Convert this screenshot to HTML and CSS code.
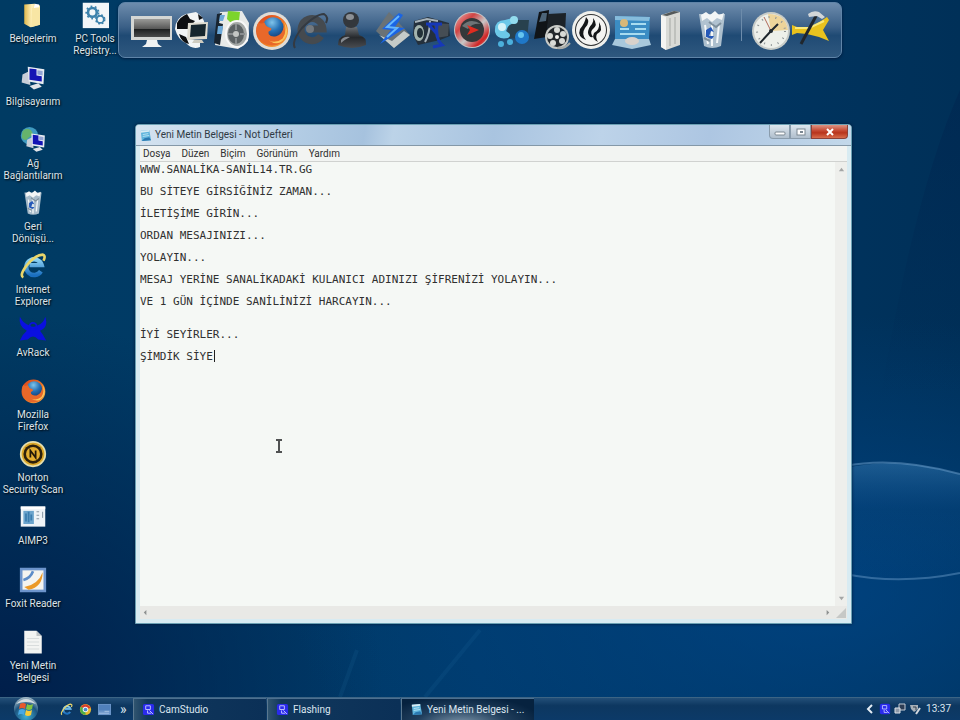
FILE: index.html
```html
<!DOCTYPE html>
<html lang="tr">
  <head>
    <meta charset="UTF-8" />
    <meta name="viewport" content="width=device-width, initial-scale=1.0" />
    <title>Yeni Metin Belgesi - Not Defteri</title>
    <link rel="stylesheet" href="styles.css">
  </head>

  <body>
    <!-- shared drawings -->
    <svg class="defs" aria-hidden="true">
      <defs>
        <linearGradient id="screen" x1="0" y1="0" x2="0" y2="1">
          <stop offset="0" stop-color="#9a9a98" />
          <stop offset="0.55" stop-color="#565656" />
          <stop offset="0.57" stop-color="#1d1f20" />
          <stop offset="1" stop-color="#4a4b4b" />
        </linearGradient>
        <linearGradient id="fox" x1="0" y1="0" x2="1" y2="1">
          <stop offset="0" stop-color="#d8401c" />
          <stop offset="0.6" stop-color="#f07a24" />
          <stop offset="1" stop-color="#f9b84a" />
        </linearGradient>
        <radialGradient id="globe" cx="0.45" cy="0.25" r="0.8">
          <stop offset="0" stop-color="#7fc4ea" />
          <stop offset="0.5" stop-color="#2470b4" />
          <stop offset="1" stop-color="#12376e" />
        </radialGradient>
        <linearGradient id="dark" x1="0" y1="0" x2="0" y2="1">
          <stop offset="0" stop-color="#6a6f74" />
          <stop offset="0.5" stop-color="#26292d" />
          <stop offset="1" stop-color="#4a4c50" />
        </linearGradient>
        <linearGradient id="folder" x1="0" y1="0" x2="1" y2="0">
          <stop offset="0" stop-color="#e0b84c" />
          <stop offset="0.5" stop-color="#fff3c0" />
          <stop offset="1" stop-color="#e6c568" />
        </linearGradient>
        <linearGradient id="redring" x1="0" y1="0" x2="1" y2="1">
          <stop offset="0" stop-color="#f0b4b4" />
          <stop offset="0.3" stop-color="#d04444" />
          <stop offset="0.55" stop-color="#c8c8c8" />
          <stop offset="0.8" stop-color="#d02424" />
          <stop offset="1" stop-color="#d8a0a0" />
        </linearGradient>
        <linearGradient id="ie" x1="0" y1="0" x2="0" y2="1">
          <stop offset="0" stop-color="#8fd4f4" />
          <stop offset="1" stop-color="#1a6fc0" />
        </linearGradient>
        <radialGradient id="orb" cx="0.5" cy="0.8" r="0.8">
          <stop offset="0" stop-color="#3fb0d8" />
          <stop offset="0.6" stop-color="#1c5580" />
          <stop offset="1" stop-color="#a8bcc8" />
        </radialGradient>

        <symbol id="i-firefox" viewBox="0 0 32 32">
          <circle cx="16" cy="16" r="15" fill="url(#fox)" />
          <circle cx="17" cy="13" r="10" fill="url(#globe)" />
          <path d="M3 8 Q6 10 9 8 Q10 12 14 13 Q17 14 14 16 Q12 16 13 19 Q15 22 20 21 Q26 19 27 12 Q32 25 21 29 Q8 32 3 21 Q0 14 3 8Z" fill="#e8682a" />
          <path d="M27 7 Q31 15 26 23 Q20 28 13 25 Q22 31 28 23 Q33 15 27 7Z" fill="#fbc45a" />
        </symbol>
        <symbol id="i-ie" viewBox="0 0 32 32">
          <path d="M25 22 A9 9 0 1 1 26 15 L12 15" fill="none" stroke="url(#ie)" stroke-width="5" />
          <path d="M5 29 Q0 27 9 15 Q19 3 27 3 Q31 4 28 10" fill="none" stroke="#e9d56a" stroke-width="3" />
        </symbol>
        <symbol id="i-computer" viewBox="0 0 32 32">
          <path d="M4 12 L12 8 L13 24 L3 21Z" fill="#c8ced8" />
          <path d="M10 3 L29 6 L28 23 L11 20Z" fill="#e8ecf2" />
          <path d="M12 5 L20 6 L20 13 L26 14 L26 20 L12 18Z" fill="#1414b4" />
          <path d="M21 7 L27 8 L27 13 L21 12Z" fill="#92a4d4" />
          <path d="M12 25 L22 22 L26 26 L17 29Z" fill="#e2e4e8" />
        </symbol>
        <symbol id="i-bin" viewBox="0 0 32 40">
          <path d="M3 4 L29 4 L25 36 Q16 40 8 36Z" fill="#c4d2dc" fill-opacity="0.85" />
          <path d="M5 5 L10 2 L14 5 L19 1 L23 5 L28 3 L26 10 L21 8 L16 12 L11 8 L6 11Z" fill="#f2f5f6" />
          <path d="M9 15 L12 34 M16 13 L16 36 M23 14 L21 33" stroke="#f4f7f8" stroke-width="2" />
          <path d="M13 12 L20 17 L25 13 M8 28 L14 31" stroke="#7d8f9c" stroke-width="2" fill="none" />
          <path d="M10 20 L15 17 L18 22 L15 21 L13 26 L18 26 L16 29 L10 27Z" fill="#2458b8" />
        </symbol>
        <symbol id="i-cam" viewBox="0 0 14 14">
          <rect x="1" y="1" width="12" height="12" rx="2" fill="#2a2aec" />
          <path d="M4 3 H9 V7 H4Z M6 8 V11 H10 M8 8 L12 12" fill="none" stroke="#c4c8ff" stroke-width="1" />
        </symbol>
        <symbol id="i-notepad" viewBox="0 0 14 14">
          <path d="M2 2 L11 1 L13 12 L3 13Z" fill="#5eb4dc" />
          <path d="M2 2 L11 1 L11 3 L2 4Z" fill="#d8ecf4" />
          <path d="M4 6 L10 5 M4 8 L11 7" stroke="#b8e4f4" />
          <path d="M3 13 L13 12 L11 9 L6 10Z" fill="#2a78b0" />
        </symbol>
      </defs>
    </svg>

    <main class="desktop">
      <svg class="wallpaper" viewBox="0 0 960 697" preserveAspectRatio="none" aria-hidden="true">
        <defs>
          <linearGradient id="glow" x1="0" y1="0" x2="0" y2="1">
            <stop offset="0" stop-color="#3f84bc" stop-opacity="0.45" />
            <stop offset="0.4" stop-color="#1e62a4" stop-opacity="0.1" />
            <stop offset="1" stop-color="#1e62a4" stop-opacity="0" />
          </linearGradient>
          <linearGradient id="shade" x1="0" y1="0" x2="0" y2="1">
            <stop offset="0" stop-color="#001c48" stop-opacity="0.3" />
            <stop offset="1" stop-color="#001c48" stop-opacity="0" />
          </linearGradient>
        </defs>
        <path d="M960 90 Q915 190 880 400 H960Z" fill="url(#shade)" />
        <path d="M845 468 Q900 456 960 474 V573 Q900 585 845 574Z" fill="url(#glow)" />
        <path d="M845 466 Q895 456 960 474" fill="none" stroke="#6ea0cc" stroke-opacity="0.5" stroke-width="2" />
        <path d="M845 574 Q900 585 960 573" fill="none" stroke="#6ea0cc" stroke-opacity="0.45" stroke-width="2" />
        <path d="M357 650 L340 697 M480 630 L425 697" stroke="#2878b0" stroke-opacity="0.12" stroke-width="4" />
      </svg>

      <nav class="icons" aria-label="Masaüstü">
        <a href="#" class="icon">
          <svg viewBox="0 0 32 32"><path d="M6 4 L18 3 L19 6 L24 5 L24 27 L13 30 L6 26Z" fill="url(#folder)" /><path d="M15 8 L24 5 L24 27 L14 30Z" fill="#f8e6a4" /><path d="M18 3 L23 4 L23 7 L17 8Z" fill="#fff" /></svg>
          <span>Belgelerim</span>
        </a>
        <a href="#" class="icon">
          <svg viewBox="0 0 32 32"><use href="#i-computer" /></svg>
          <span>Bilgisayarım</span>
        </a>
        <a href="#" class="icon">
          <svg viewBox="0 0 32 32"><circle cx="12" cy="11" r="10" fill="#3f9ac0" /><path d="M4 6 Q9 1 14 5 Q18 10 11 13 Q7 19 3 13Z" fill="#66b46c" /><svg x="6" y="6" width="26" height="26"><use href="#i-computer" /></svg></svg>
          <span>Ağ<br />Bağlantılarım</span>
        </a>
        <a href="#" class="icon">
          <svg viewBox="0 0 32 32"><svg x="3" y="1" width="26" height="30"><use href="#i-bin" /></svg></svg>
          <span>Geri<br />Dönüşü...</span>
        </a>
        <a href="#" class="icon">
          <svg viewBox="0 0 32 32"><use href="#i-ie" /></svg>
          <span>Internet<br />Explorer</span>
        </a>
        <a href="#" class="icon">
          <svg viewBox="0 0 32 32"><path d="M1 2 Q5 10 12 12 Q16 15 21 12 Q28 10 30 2 Q34 14 24 18 Q28 23 31 29 L22 28 Q16 21 10 28 L1 29 Q4 22 9 18 Q-1 13 1 2Z" fill="#0a10e0" /><circle cx="16" cy="13" r="4" fill="none" stroke="#0a10e0" stroke-width="2" /></svg>
          <span>AvRack</span>
        </a>
        <a href="#" class="icon">
          <svg viewBox="0 0 32 32"><svg x="2" y="2" width="29" height="29"><use href="#i-firefox" /></svg></svg>
          <span>Mozilla<br />Firefox</span>
        </a>
        <a href="#" class="icon">
          <svg viewBox="0 0 32 32"><circle cx="16" cy="16" r="15" fill="#e6dfae" /><circle cx="16" cy="16" r="13" fill="#dba728" /><circle cx="16" cy="16" r="11" fill="#2c200c" /><circle cx="16" cy="16" r="8" fill="#e4ae30" /><path d="M13 20 V12 L19 20 V12" fill="none" stroke="#221808" stroke-width="2" /></svg>
          <span>Norton<br />Security Scan</span>
        </a>
        <a href="#" class="icon">
          <svg viewBox="0 0 32 32"><rect x="2" y="4" width="28" height="23" fill="#eef3f7" /><rect x="5" y="9" width="12" height="15" fill="#6ca4cc" /><path d="M8 12 V21 M11 10 V22 M14 13 V20" stroke="#3a7cae" stroke-width="2" /><path d="M20 10 H23 M20 14 H23 M20 18 H23 M27 10 V17" stroke="#7a8a98" stroke-width="1" /><rect x="2" y="4" width="28" height="3" fill="#fff" /></svg>
          <span>AIMP3</span>
        </a>
        <a href="#" class="icon">
          <svg viewBox="0 0 32 32"><rect x="1" y="2" width="30" height="28" fill="#6c94cc" /><rect x="4" y="5" width="24" height="22" fill="#f4f4f0" /><path d="M5 16 Q13 14 16 6" fill="none" stroke="#5c8cc8" stroke-width="3" /><path d="M6 24 Q22 21 27 7 Q27 24 11 27Z" fill="#eb9a28" /></svg>
          <span>Foxit Reader</span>
        </a>
        <a href="#" class="icon">
          <svg viewBox="0 0 32 32"><path d="M6 3 H20 L26 9 V29 H6Z" fill="#f3f4f2" /><path d="M20 3 V9 H26Z" fill="#bfc4c6" /><path d="M9 12 H23 M9 16 H23 M9 20 H23 M9 24 H23" stroke="#d4d8d8" /></svg>
          <span>Yeni Metin<br />Belgesi</span>
        </a>
        <a href="#" class="icon">
          <svg viewBox="0 0 32 32"><rect x="2" y="2" width="30" height="29" fill="#f2f6f8" /><g fill="none" stroke="#3c82ac"><circle cx="13" cy="13" r="5" stroke-width="3" /><circle cx="13" cy="13" r="7" stroke-width="2" stroke-dasharray="2 3" /><circle cx="22" cy="21" r="4" stroke-width="2" /><circle cx="22" cy="21" r="5" stroke-width="2" stroke-dasharray="2 2" /></g></svg>
          <span>PC Tools<br />Registry...</span>
        </a>
      </nav>

      <nav class="dock" aria-label="Dock">
        <button type="button" aria-label="Bilgisayar">
          <svg viewBox="0 0 40 44"><rect x="-1" y="7" width="41" height="24" fill="#d4d6d4" /><rect x="2" y="10" width="36" height="18" fill="url(#screen)" /><path d="M15 31 H25 L26 35 L30 38 H10 L14 35Z" fill="#f0f2f2" /></svg>
        </button>
        <button type="button" aria-label="Ağ">
          <svg viewBox="0 0 40 44"><path d="M3 20 Q4 8 14 5 L24 3 Q32 8 33 16 L22 14 L18 30 L28 32 V38 Q20 41 14 34 Q6 31 3 20Z" fill="#f2f4f4" /><path d="M5 14 Q8 8 15 5 L18 10 L23 12 L16 20 L5 20Z M7 25 L14 28 L17 35 Q9 33 7 25Z M26 5 L31 9 L27 11Z" fill="#0d0e10" /><path d="M16 14 L36 13 L35 30 L15 31Z" fill="#dedbd0" /><path d="M19 16 L34 15 L33 27 L18 28Z" fill="#16262e" /><path d="M22 31 H30 L32 34 H20Z" fill="#cfccc0" /></svg>
        </button>
        <button type="button" aria-label="Denetim">
          <svg viewBox="0 0 40 44"><path d="M8 3 L30 2 L37 14 L36 32 L26 40 L3 36Z" fill="#e8eae8" /><path d="M5 5 L10 4 L7 14 L11 15 L8 36 L2 34Z" fill="#182430" /><path d="M8 6 L13 6 L11 12 L7 12Z M6 17 L11 17 L10 25 L5 25Z" fill="#6ca8d8" /><path d="M16 2 L28 3 L27 12 L19 14 L15 10Z" fill="#7cd42c" /><ellipse cx="25" cy="25" rx="11" ry="13" fill="#a4a8a6" stroke="#f8f8f8" stroke-width="2" /><ellipse cx="24" cy="25" rx="8" ry="10" fill="#5c6264" /><circle cx="24" cy="25" r="3" fill="#c4c6c4" /><path d="M24 15 V21 M24 29 V35 M16 25 H21 M28 25 H33" stroke="#8a8e90" stroke-width="2" /></svg>
        </button>
        <button type="button" aria-label="Firefox">
          <svg viewBox="0 0 40 44"><circle cx="20" cy="22" r="19" fill="#dfdcd6" /><svg x="3" y="5" width="34" height="34"><use href="#i-firefox" /></svg></svg>
        </button>
        <button type="button" aria-label="Internet Explorer">
          <svg viewBox="0 0 40 44"><path d="M29 27 A11 11 0 1 1 31 20 L15 20" fill="none" stroke="#454a4f" stroke-width="7" /><circle cx="18" cy="20" r="4" fill="#74797e" /><path d="M3 39 Q-1 33 10 19 Q24 5 32 5 Q37 8 34 14" fill="none" stroke="#343a42" stroke-width="2" /></svg>
        </button>
        <button type="button" aria-label="Messenger">
          <svg viewBox="0 0 40 44"><path d="M14 18 H25 L27 26 Q35 28 34 36 Q20 42 6 36 Q6 28 13 26Z" fill="url(#dark)" /><circle cx="19" cy="11" r="8" fill="#33373c" /><ellipse cx="18" cy="8" rx="4" ry="3" fill="#8c9095" /><path d="M9 31 Q12 27 18 28 Q12 31 9 34Z" fill="#868a90" /></svg>
        </button>
        <button type="button" aria-label="Winamp">
          <svg viewBox="0 0 40 44"><path d="M17 3 L38 26 L22 39 L4 22Z" fill="#6a7276" /><path d="M7 26 L22 39 L38 26 L32 22 L20 32Z" fill="#c6cbc8" /><path d="M27 4 L10 20 L19 21 L8 35 L33 19 L23 18 L31 6Z" fill="#1a64e4" /><path d="M27 7 L15 18 L25 19 L15 28" fill="none" stroke="#68b8fc" stroke-width="2" /></svg>
        </button>
        <button type="button" aria-label="Kamera">
          <svg viewBox="0 0 40 44"><path d="M2 12 L16 8 L37 14 L38 27 L28 31 L6 36 L1 26Z" fill="#24303c" /><path d="M22 14 L37 15 L36 27 L24 29Z" fill="#454d54" /><ellipse cx="7" cy="24" rx="5" ry="8" fill="#a4b4ae" /><ellipse cx="8" cy="24" rx="3" ry="5" fill="#223038" /><path d="M3 13 L15 10 L26 12 M18 12 Q18 24 13 33" fill="none" stroke="#a6b2ba" stroke-width="2" /><path d="M14 15 H30 M25 14 Q23 30 30 36 L21 38 M17 16 L25 25" fill="none" stroke="#1638b8" stroke-width="3" /></svg>
        </button>
        <button type="button" aria-label="Oynatıcı">
          <svg viewBox="0 0 40 44"><circle cx="20" cy="21" r="18" fill="#c4c2c4" /><circle cx="20" cy="21" r="17" fill="url(#redring)" /><circle cx="20" cy="21" r="12" fill="#34383a" /><path d="M10 17 Q18 8 29 15 Q20 14 16 20Z" fill="#6e7476" /><path d="M15 16 L27 21 L15 26 L18 21Z" fill="#e02c20" /></svg>
        </button>
        <button type="button" aria-label="Sohbet">
          <svg viewBox="0 0 40 44"><path d="M16 11 H37 L35 30 L15 29Z" fill="#28414e" /><path d="M3 23 Q2 11 13 11 Q24 7 25 14 Q16 14 14 22 Q21 26 16 29 Q5 31 3 23Z" fill="#6cc8e8" /><circle cx="10" cy="18" r="4" fill="#d4f2f8" /><circle cx="22" cy="11" r="4" fill="#93dcee" /><circle cx="30" cy="28" r="7" fill="#1f78c8" /><circle cx="29" cy="26" r="3" fill="#64c4f0" /><circle cx="9" cy="35" r="3" fill="#4cb0dc" /><circle cx="18" cy="33" r="3" fill="#4cb0dc" /></svg>
        </button>
        <button type="button" aria-label="Film">
          <svg viewBox="0 0 40 44"><path d="M7 3 L17 1 L15 28 L2 30Z" fill="#101418" /><path d="M16 5 L34 4 L33 26 L15 27Z" fill="#1c2228" /><path d="M10 4 L7 13 L14 12 L15 4Z" fill="#4c6478" /><circle cx="25" cy="28" r="12" fill="#c9cbc7" /><circle cx="25" cy="28" r="10" fill="#23282c" /><g fill="#d8dad6"><circle cx="25" cy="21" r="3" /><circle cx="31" cy="25" r="3" /><circle cx="30" cy="32" r="3" /><circle cx="21" cy="34" r="3" /><circle cx="18" cy="27" r="3" /></g><circle cx="25" cy="28" r="2" fill="#f4f4f0" /><path d="M25 39 Q33 40 38 34" fill="none" stroke="#a8aca8" stroke-width="2" /></svg>
        </button>
        <button type="button" aria-label="Yakıcı">
          <svg viewBox="0 0 40 44"><circle cx="19" cy="21" r="19" fill="#f0f0ec" /><circle cx="19" cy="21" r="16" fill="#303234" /><circle cx="19" cy="21" r="15" fill="#f4f4f2" /><path d="M14 8 Q19 13 13 19 Q9 25 14 31 Q5 28 8 20 Q13 14 14 8Z M21 9 Q27 16 20 21 Q18 24 21 28 Q17 29 16 24 Q16 19 20 15 Q22 12 21 9Z M27 13 Q32 22 25 25 Q23 28 26 33 Q19 30 22 24 Q28 21 27 13Z" fill="#141618" /></svg>
        </button>
        <button type="button" aria-label="Masaüstü ayarları">
          <svg viewBox="0 0 40 44"><path d="M3 7 L38 8 L37 30 L3 30Z" fill="#3b8dc4" /><path d="M3 7 L38 8 L37 12 L3 11Z" fill="#86bcdc" /><circle cx="12" cy="14" r="4" fill="#d8b878" /><path d="M19 15 H34 M23 20 H34 M8 20 H17 M8 25 H33" stroke="#a8dcf0" stroke-width="2" /><path d="M3 30 H37 L39 36 L20 40 L0 36Z" fill="#a8c8dc" /><ellipse cx="20" cy="32" rx="7" ry="4" fill="#d8d2cc" /></svg>
        </button>
        <button type="button" aria-label="Belgeler">
          <svg viewBox="0 0 40 44"><path d="M9 6 L22 2 L28 3 L28 36 L14 41 L9 38Z" fill="#d9dad6" /><path d="M9 6 L14 8 L14 41 L9 38Z" fill="#f4f4f2" /><path d="M10 6 L22 2 L28 3 L15 7Z" fill="#54595a" /><path d="M18 9 V37 M23 8 V35" stroke="#bfc1bd" stroke-width="2" /></svg>
        </button>
        <button type="button" aria-label="Geri Dönüşüm Kutusu">
          <svg viewBox="0 0 40 44"><svg x="4" y="1" width="32" height="40"><use href="#i-bin" /></svg></svg>
        </button>
        <span class="dock-line"></span>
        <button type="button" aria-label="Saat">
          <svg viewBox="0 0 40 44"><circle cx="20" cy="22" r="19" fill="#c8ccc8" /><circle cx="20" cy="22" r="17" fill="#eef0ea" /><path d="M20 22 L17 5 Q35 5 37 21Z" fill="#edd49a" /><circle cx="20" cy="22" r="14" fill="none" stroke="#8c9294" stroke-width="2" stroke-dasharray="1 6" /><path d="M20 22 L13 8" stroke="#b06a58" stroke-width="1" /><path d="M9 34 L20 22 L27 15" fill="none" stroke="#20282e" stroke-width="2" /><circle cx="20" cy="22" r="2" fill="#20282e" /></svg>
        </button>
        <button type="button" aria-label="Araçlar">
          <svg viewBox="0 0 40 44"><path d="M1 16 L6 18 L21 18 L36 8 L38 11 L32 21 L38 32 L28 28 L16 25 L6 24 L1 26Z" fill="#e9c21e" /><path d="M4 19 H18 L33 12" fill="none" stroke="#fbe878" stroke-width="2" /><path d="M25 7 L10 35" stroke="#20262c" stroke-width="3" /><path d="M17 5 Q22 1 28 3 L34 8 L31 10 L26 7 L18 8Z" fill="#d2d6d8" /></svg>
        </button>
      </nav>

      <section class="window">
        <header class="titlebar">
          <svg class="small" viewBox="0 0 14 14"><use href="#i-notepad" /></svg>
          <h1>Yeni Metin Belgesi - Not Defteri</h1>
          <div class="controls">
            <button type="button" aria-label="Simge durumuna küçült"><svg viewBox="0 0 12 10"><rect x="1" y="5" width="10" height="3" rx="1" fill="#fff" stroke="#7b8791" /></svg></button>
            <button type="button" aria-label="Ekranı kapla"><svg viewBox="0 0 12 10"><rect x="2" y="2" width="8" height="6" fill="#fff" stroke="#7b8791" /><rect x="5" y="4" width="3" height="2" fill="#7b8791" /></svg></button>
            <button type="button" class="close" aria-label="Kapat"><svg viewBox="0 0 12 10"><path d="M3 2 L9 8 M9 2 L3 8" stroke="#fff" stroke-width="2" /></svg></button>
          </div>
        </header>
        <nav class="menu">
          <button type="button">Dosya</button>
          <button type="button">Düzen</button>
          <button type="button">Biçim</button>
          <button type="button">Görünüm</button>
          <button type="button">Yardım</button>
        </nav>
        <div class="editor">
          <textarea aria-label="Metin" spellcheck="false">WWW.SANALİKA-SANİL14.TR.GG

BU SİTEYE GİRSİĞİNİZ ZAMAN...

İLETİŞİME GİRİN...

ORDAN MESAJINIZI...

YOLAYIN...

MESAJ YERİNE SANALİKADAKİ KULANICI ADINIZI ŞİFRENİZİ YOLAYIN...

VE 1 GÜN İÇİNDE SANİLİNİZİ HARCAYIN...


İYİ SEYİRLER...

ŞİMDİK SİYE</textarea>
          <span class="caret"></span>
          <div class="scroll-y">
            <svg viewBox="0 0 8 8"><path d="M1 6 L4 2 L7 6Z" fill="#a4a6a6" /></svg>
            <svg viewBox="0 0 8 8"><path d="M1 2 L4 6 L7 2Z" fill="#a4a6a6" /></svg>
          </div>
        </div>
        <div class="scroll-x">
          <svg viewBox="0 0 8 8"><path d="M5 1 L2 4 L5 7Z" fill="#8e9090" /></svg>
          <svg viewBox="0 0 8 8"><path d="M3 1 L6 4 L3 7Z" fill="#8e9090" /></svg>
          <svg class="grip" viewBox="0 0 12 12"><path d="M11 1 V11 H1Z" fill="#c6c8c6" /></svg>
        </div>
      </section>

      <svg class="cursor" viewBox="0 0 8 16" aria-hidden="true"><path d="M1 2 H7 M4 2 V14 M1 14 H7" fill="none" stroke="#505252" stroke-width="2" /></svg>
    </main>

    <footer class="taskbar">
      <button type="button" class="start" aria-label="Başlat">
        <svg viewBox="0 0 24 24"><circle cx="12" cy="12" r="12" fill="url(#orb)" /><path d="M2 7 Q12 -3 22 7 Q12 3 2 7Z" fill="#d4dce0" /><path d="M6 7 Q9 5 12 7 L11 12 Q8 10 5 12Z" fill="#e8582c" /><path d="M13 7 Q16 9 19 7 L18 12 Q15 14 12 12Z" fill="#84c440" /><path d="M5 13 Q8 11 11 13 L10 18 Q7 16 4 18Z" fill="#48a8e4" /><path d="M12 13 Q15 15 18 13 L17 18 Q14 20 11 18Z" fill="#f8cc38" /></svg>
      </button>
      <nav class="quick" aria-label="Hızlı başlat">
        <a href="#" aria-label="Internet Explorer"><svg viewBox="0 0 32 32"><use href="#i-ie" /></svg></a>
        <a href="#" aria-label="Chrome"><svg viewBox="0 0 14 14"><circle cx="7" cy="7" r="6" fill="#e8b830" /><path d="M7 7 L2 4 Q7 -2 13 5Z" fill="#d83c2c" /><path d="M7 7 L2 4 Q-1 11 7 13Z" fill="#4cae48" /><circle cx="7" cy="7" r="3" fill="#f0f2f4" /><circle cx="7" cy="7" r="2" fill="#4888cc" /></svg></a>
        <a href="#" aria-label="Masaüstünü göster"><svg viewBox="0 0 14 14"><rect x="0" y="1" width="14" height="12" fill="#6a94c8" /><path d="M1 2 H13 V8 H1Z" fill="#5080bc" /><path d="M7 9 H12 M1 11 H12" stroke="#a8c4e4" /></svg></a>
        <span class="more">»</span>
      </nav>
      <div class="tasks">
        <button type="button" class="task"><svg class="small" viewBox="0 0 14 14"><use href="#i-cam" /></svg>CamStudio</button>
        <button type="button" class="task"><svg class="small" viewBox="0 0 14 14"><use href="#i-cam" /></svg>Flashing</button>
        <button type="button" class="task active"><svg class="small" viewBox="0 0 14 14"><use href="#i-notepad" /></svg>Yeni Metin Belgesi - ...</button>
      </div>
      <div class="tray">
        <svg viewBox="0 0 12 12"><path d="M8 2 L4 6 L8 10" fill="none" stroke="#e4ecf4" stroke-width="2" /></svg>
        <svg viewBox="0 0 14 14"><use href="#i-cam" /></svg>
        <svg viewBox="0 0 12 12"><path d="M5 1 H11 V7 H5Z" fill="#2c3c54" stroke="#c4ccd6" /><path d="M1 5 H6 V10 H1Z" fill="#8c98a8" stroke="#dce2e8" /></svg>
        <svg viewBox="0 0 12 12"><path d="M1 2 H9 V6 L5 9 L2 6Z" fill="#a8b0b8" /><path d="M4 4 H7 V7" stroke="#38424e" fill="none" /><path d="M11 5 L7 11" stroke="#d4dae0" stroke-width="2" /></svg>
        <time>13:37</time>
      </div>
    </footer>
  </body>
</html>
```
FILE: styles.css
```css
* {
  box-sizing: border-box;
}

body {
  margin: 0;
  height: 100vh;
  display: flex;
  flex-direction: column;
  overflow: hidden;
  font-family: Roboto, "Liberation Sans", sans-serif;
  font-size: 10px;
  line-height: 12px;
  background-color: #003a68;
}

button {
  border: 0;
  padding: 0;
  background: none;
  font: inherit;
  color: inherit;
}

a {
  color: inherit;
  text-decoration: none;
}

svg {
  display: block;
  overflow: visible;
  flex: none;
}

.defs {
  position: absolute;
  width: 0;
  height: 0;
}

/* desktop */
.desktop {
  flex: 1;
  position: relative;
  min-height: 0;
  background:
    radial-gradient(ellipse 55% 40% at 85% 85%, rgba(0, 72, 140, 0.7), transparent),
    radial-gradient(ellipse 40% 55% at 0% 100%, #001e4a, transparent),
    linear-gradient(90deg, #003b63 0%, #003a6b 50%, #003058 100%);
}

.wallpaper {
  position: absolute;
  width: 100%;
  height: 100%;
}

.icons {
  position: relative;
  width: 126px;
  height: 100%;
  margin-left: 2px;
  padding: 1px 0 6px;
  display: grid;
  grid-template-rows: repeat(11, 1fr);
  grid-auto-flow: column;
  grid-auto-columns: 62px;
}

.icon {
  display: flex;
  flex-direction: column;
  align-items: center;
  gap: 4px;
  min-height: 0;
  text-align: center;
  white-space: nowrap;
  color: #dde4ea;
  text-shadow: 1px 1px 2px #000;
}

.icon > svg {
  width: 28px;
  height: 28px;
}

/* dock */
.dock {
  position: absolute;
  top: 2px;
  left: 118px;
  display: flex;
  padding: 6px 10px 4px 13px;
  border: 1px solid #5f84a8;
  border-radius: 7px;
  background: linear-gradient(#6d8cad, #3a5f86 45%, #1f4a74 60%, #2f587f);
  box-shadow: 0 1px 3px rgba(0, 10, 40, 0.6);
}

.dock button > svg {
  width: 40px;
  height: 44px;
}

.dock-line {
  width: 1px;
  height: 32px;
  margin: 0 9px;
  background-color: #6d8cab;
}

/* notepad */
.window {
  position: absolute;
  top: 124px;
  right: 108px;
  bottom: 73px;
  left: 135px;
  display: flex;
  flex-direction: column;
  padding: 0 4px 4px;
  border: 1px solid #6ba0b4;
  border-radius: 4px 4px 0 0;
  background-color: #d8ebf2;
  box-shadow: 0 0 3px #001838;
}

.titlebar {
  display: flex;
  align-items: center;
  gap: 3px;
  height: 21px;
  margin: 0 -4px;
  padding-left: 3px;
  border-bottom: 1px solid #8498a8;
  border-radius: 3px 3px 0 0;
  background: linear-gradient(100deg, #d5e3f0, #b6cfe6 20%, #a6c2de 32%, #bcd3e8 36%, #a9c4e0 50%, #bdd3e9 65%, #adc6e2 80%, #c3d8ea);
}

.small {
  width: 13px;
  height: 13px;
}

.titlebar h1 {
  flex: 1;
  margin: 0;
  font-size: 10px;
  font-weight: normal;
  color: #303a44;
}

.controls {
  display: flex;
  align-self: flex-start;
  margin-right: 3px;
}

.controls button {
  display: flex;
  justify-content: center;
  align-items: center;
  width: 21px;
  height: 14px;
  border: 1px solid #8a9cac;
  border-top: 0;
  background: linear-gradient(#dde6ee, #b0bfcd);
}

.controls button:first-child {
  border-radius: 0 0 0 4px;
}

.controls .close {
  width: 37px;
  border-color: #8c4038;
  border-radius: 0 0 4px 0;
  background: linear-gradient(#dd9484, #c44630 45%, #b8341c 60%, #d86c4c);
}

.controls svg {
  width: 12px;
  height: 10px;
}

.menu {
  display: flex;
  gap: 11px;
  height: 16px;
  padding-left: 3px;
  border-bottom: 1px solid #d0d2d0;
  background-color: #f2f4f2;
  color: #303030;
}

.editor {
  flex: 1;
  min-height: 0;
  display: flex;
  position: relative;
  background-color: #f5f8f5;
}

.editor textarea {
  flex: 1;
  min-width: 0;
  border: 0;
  padding: 2px 0 0;
  resize: none;
  outline: 0;
  overflow: hidden;
  white-space: pre;
  background: none;
  color: #303030;
  font-family: "DejaVu Sans Mono", monospace;
  font-size: 11px;
  line-height: 11px;
}

/* sits after the last typed letter */
.caret {
  position: absolute;
  top: 188px;
  left: 74px;
  width: 1px;
  height: 12px;
  background-color: #202020;
}

.scroll-y {
  display: flex;
  flex-direction: column;
  justify-content: space-between;
  align-items: center;
  width: 12px;
  padding: 4px 0;
  background-color: #eeefec;
}

.scroll-x {
  display: flex;
  justify-content: space-between;
  align-items: center;
  height: 13px;
  padding-left: 2px;
  background-color: #e9e9e6;
}

.scroll-y svg,
.scroll-x svg {
  width: 7px;
  height: 7px;
}

.scroll-x svg:first-child {
  margin-right: auto;
}

.scroll-x .grip {
  width: 12px;
  height: 12px;
  margin-left: 4px;
}

.cursor {
  position: absolute;
  top: 438px;
  left: 275px;
  width: 8px;
  height: 16px;
}

/* taskbar */
.taskbar {
  display: flex;
  align-items: center;
  height: 23px;
  padding: 0 9px 0 14px;
  border-top: 1px solid #3c6484;
  background: linear-gradient(#234f78, #0d3760 35%, #0c3a68);
  color: #dce6f0;
}

.start svg {
  width: 24px;
  height: 24px;
}

.quick {
  display: flex;
  align-items: center;
  gap: 6px;
  margin-left: 22px;
}

.quick svg {
  width: 13px;
  height: 13px;
}

.quick .more {
  align-self: flex-start;
  width: 12px;
  padding-left: 3px;
  font-size: 14px;
}

.tasks {
  flex: 1;
  display: flex;
  gap: 1px;
  margin-left: 4px;
}

.task {
  display: flex;
  align-items: center;
  gap: 4px;
  width: 133px;
  height: 22px;
  padding-left: 8px;
  border-top: 1px solid #4d7090;
  border-left: 1px solid #5a7890;
  background: linear-gradient(90deg, #30546f, #10375c 10%, #0b3057);
  white-space: nowrap;
}

.task.active {
  background: radial-gradient(ellipse at 45% 120%, #8098ac, #203e5c 45%, #06223f 80%);
}

.tray {
  display: flex;
  align-items: center;
  gap: 3px;
}

.tray svg {
  width: 12px;
  height: 12px;
}

.tray time {
  margin-left: 2px;
}
```
